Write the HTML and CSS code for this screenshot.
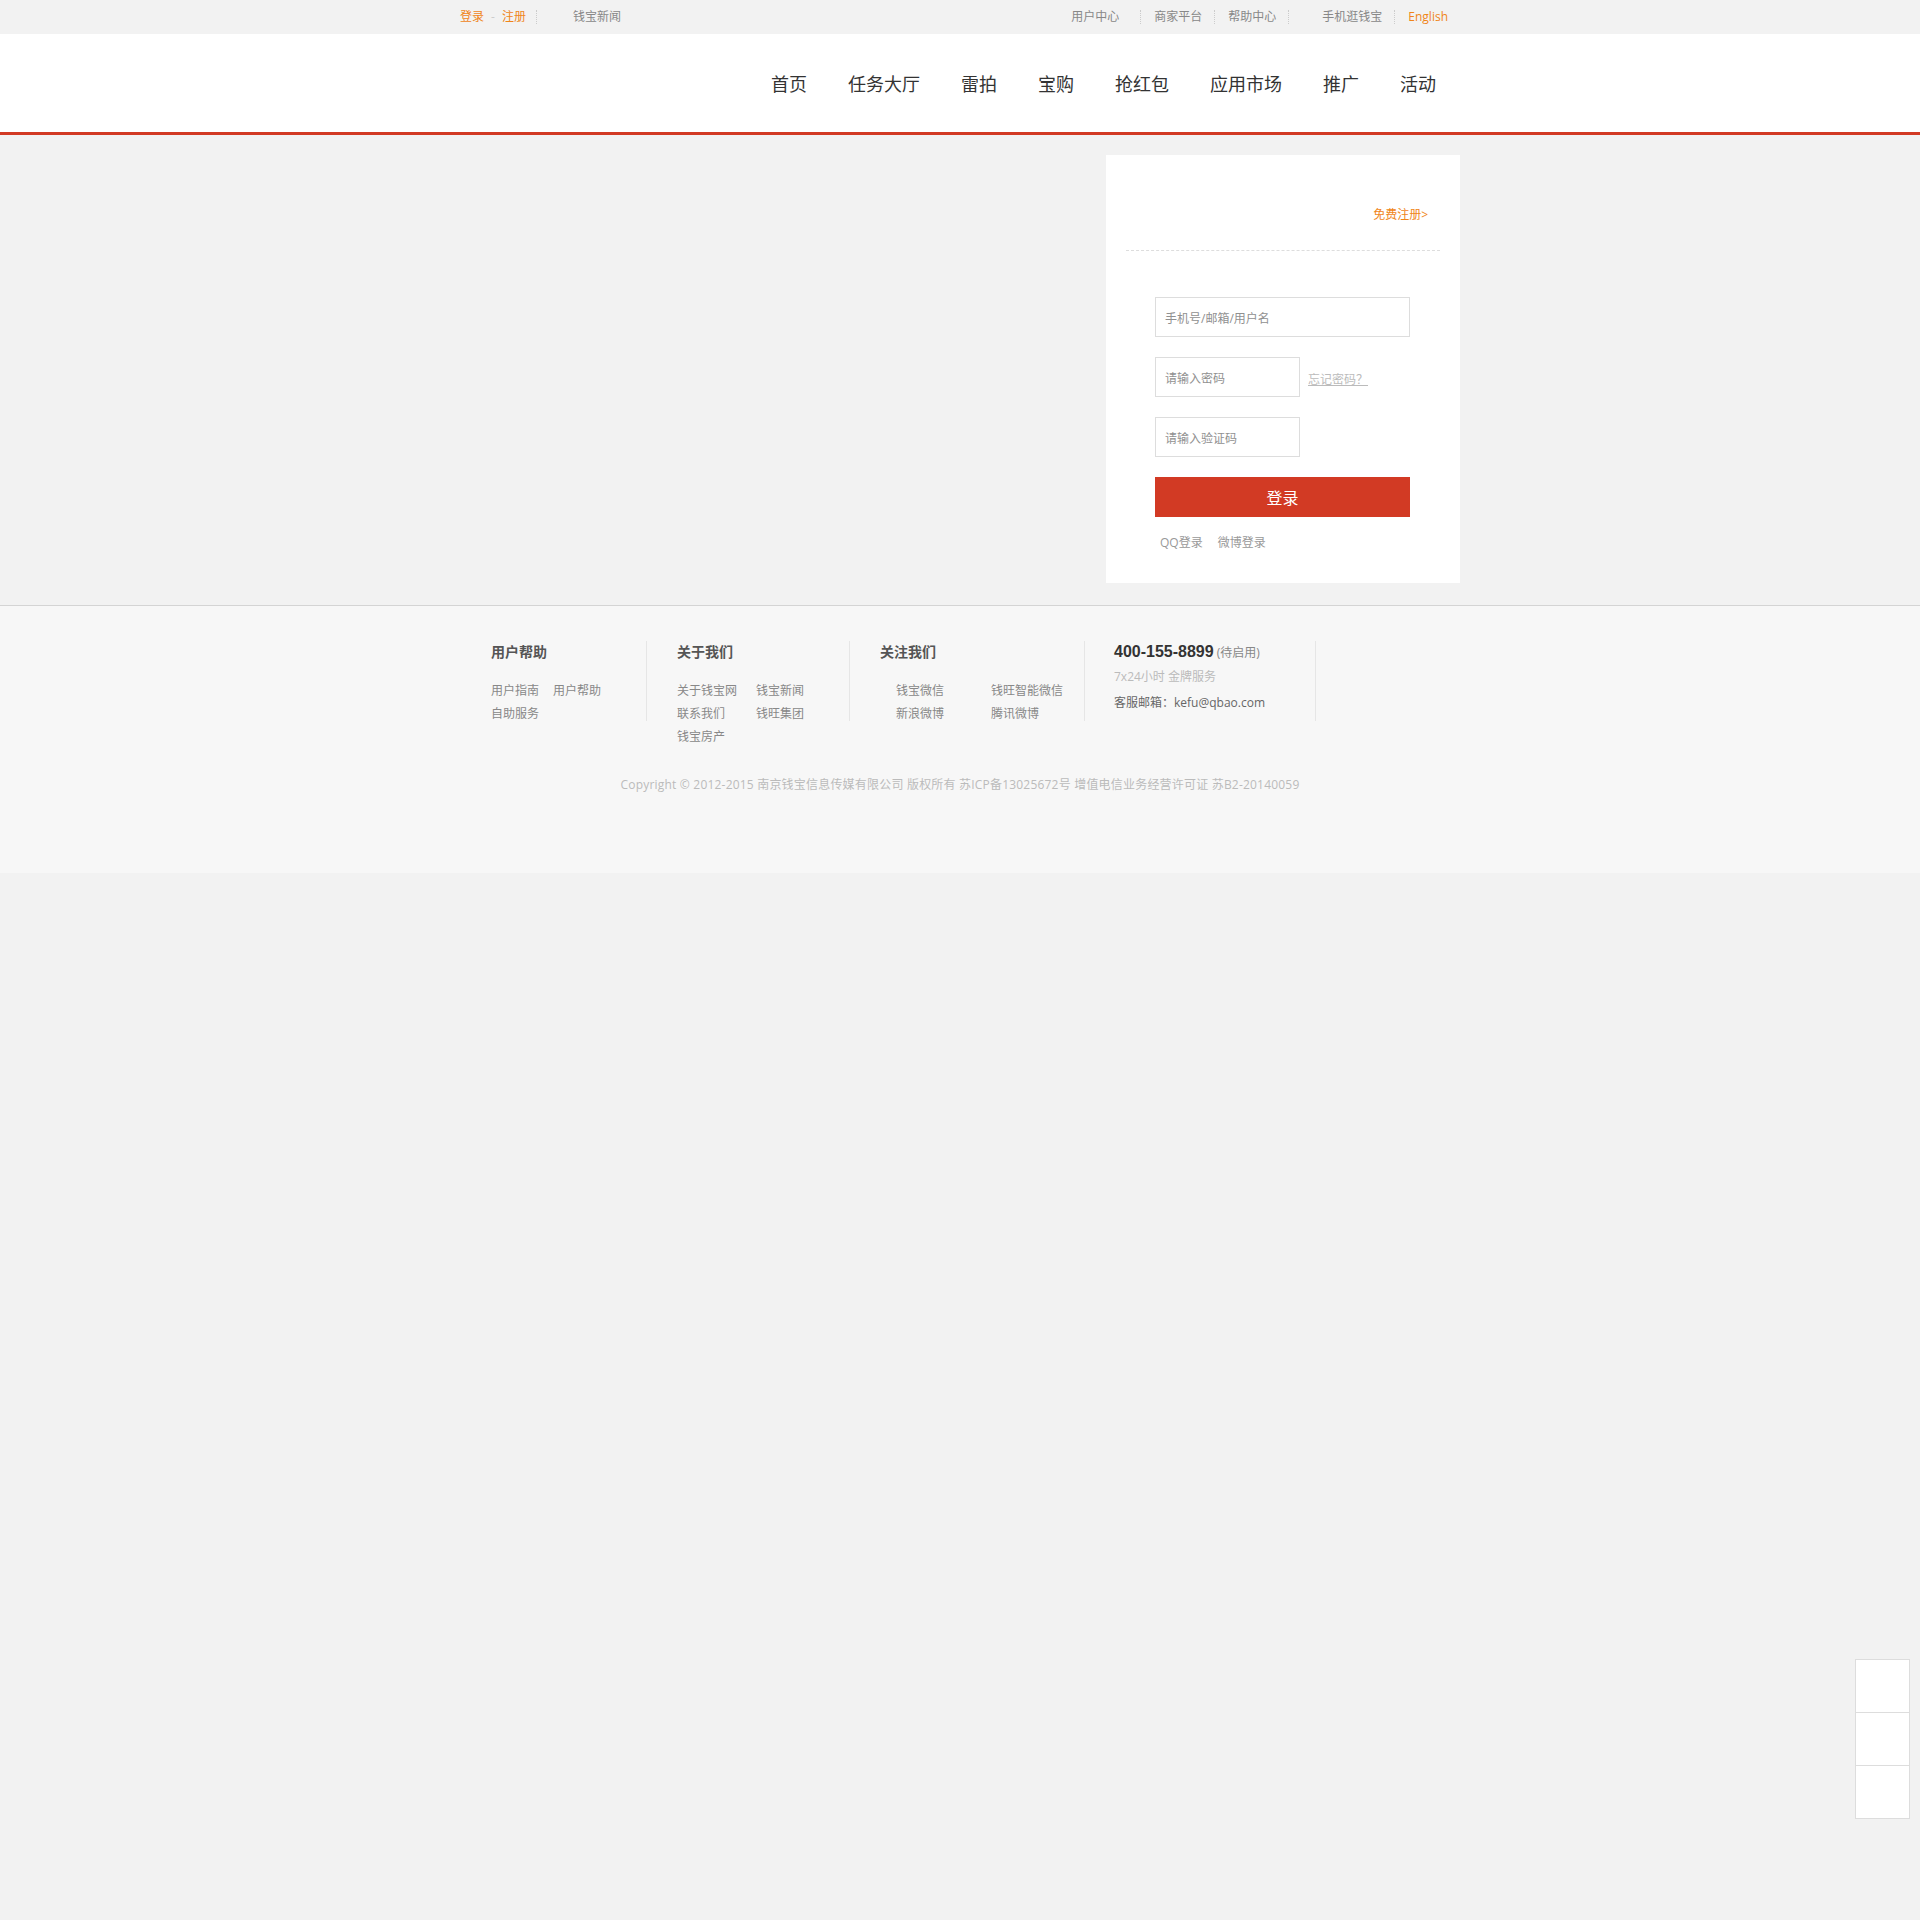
FILE: index.html
```html
<!DOCTYPE html>
<html lang="zh-cn">
<head>
  <meta charset="UTF-8">
  <meta name="viewport" content="width=device-width, initial-scale=1.0">
  <title>登录 - 钱宝网</title>
  <link rel="stylesheet" href="styles.css">
</head>
<body>
  <div class="topbar">
    <div class="wrap">
      <div class="top-left">
        <a href="#" class="hl">登录</a><span class="dash">-</span><a href="#" class="hl">注册</a><i class="sep sep-left"></i><a href="#">钱宝新闻</a>
      </div>
      <div class="top-right">
        <a href="#" class="user">用户中心</a><i class="sep"></i><a href="#">商家平台</a><i class="sep"></i><a href="#">帮助中心</a><i class="sep"></i><a href="#" class="mobile">手机逛钱宝</a><i class="sep"></i><a href="#" class="hl">English</a>
      </div>
    </div>
  </div>

  <header class="header">
    <div class="wrap">
      <ul class="nav">
        <li><a href="#">首页</a></li>
        <li><a href="#">任务大厅</a></li>
        <li><a href="#">雷拍</a></li>
        <li><a href="#">宝购</a></li>
        <li><a href="#">抢红包</a></li>
        <li><a href="#">应用市场</a></li>
        <li><a href="#">推广</a></li>
        <li><a href="#">活动</a></li>
      </ul>
    </div>
  </header>

  <div class="main">
    <div class="wrap">
      <div class="login-box">
        <div class="login-head">
          <a href="#">免费注册&gt;</a>
        </div>
        <form class="login-form">
          <div class="form-row">
            <input class="input" type="text" placeholder="手机号/邮箱/用户名">
          </div>
          <div class="form-row">
            <input class="input short" type="password" placeholder="请输入密码">
            <a href="#" class="forget">忘记密码？</a>
          </div>
          <div class="form-row">
            <input class="input short" type="text" placeholder="请输入验证码">
          </div>
          <button type="button" class="btn">登录</button>
          <div class="other">
            <a href="#">QQ登录</a><a href="#">微博登录</a>
          </div>
        </form>
      </div>
    </div>
  </div>

  <footer class="footer">
    <div class="wrap">
      <div class="foot-cols">
        <div class="col col1">
          <h4>用户帮助</h4>
          <ul class="links">
            <li><a href="#">用户指南</a></li>
            <li><a href="#">用户帮助</a></li>
            <li><a href="#">自助服务</a></li>
          </ul>
        </div>
        <div class="col col2">
          <h4>关于我们</h4>
          <ul class="links">
            <li><a href="#">关于钱宝网</a></li>
            <li><a href="#">钱宝新闻</a></li>
            <li><a href="#">联系我们</a></li>
            <li><a href="#">钱旺集团</a></li>
            <li><a href="#">钱宝房产</a></li>
          </ul>
        </div>
        <div class="col col3">
          <h4>关注我们</h4>
          <ul class="links">
            <li><a href="#">钱宝微信</a></li>
            <li><a href="#">钱旺智能微信</a></li>
            <li><a href="#">新浪微博</a></li>
            <li><a href="#">腾讯微博</a></li>
          </ul>
        </div>
        <div class="col col4">
          <p class="tel"><b>400-155-8899</b> (待启用)</p>
          <p class="service">7x24小时 金牌服务</p>
          <p class="mail">客服邮箱：kefu@qbao.com</p>
        </div>
      </div>
      <p class="copyright">Copyright © 2012-2015 南京钱宝信息传媒有限公司 版权所有 苏ICP备13025672号 增值电信业务经营许可证 苏B2-20140059</p>
    </div>
  </footer>

  <div class="side-bar">
    <a href="#"></a>
    <a href="#"></a>
    <a href="#"></a>
  </div>
</body>
</html>
```

FILE: styles.css
```css
* {
  box-sizing: border-box;
}

body {
  margin: 0;
  min-height: 1920px;
  background-color: #f2f2f2;
  font-family: "Open Sans", "Noto Sans CJK SC", sans-serif;
  font-size: 12px;
  color: #888;
}

a {
  color: inherit;
  text-decoration: none;
}

ul {
  list-style: none;
  margin: 0;
  padding: 0;
}

p,
h4 {
  margin: 0;
}

.wrap {
  width: 1000px;
  margin: 0 auto;
}

/* top bar */
.topbar .wrap {
  height: 34px;
  display: flex;
  justify-content: space-between;
  align-items: center;
  line-height: 16px;
}

.top-left,
.top-right {
  display: flex;
  align-items: center;
}

.top-right {
  padding-right: 12px;
}

.hl {
  color: #f08519;
}

.dash {
  color: #ccc;
  margin: 0 7px;
}

.sep {
  display: inline-block;
  width: 0;
  height: 14px;
  border-left: 1px dotted #ccc;
  margin: 0 13px 0 12px;
}

.sep-left {
  margin: 0 36px 0 10px;
}

.top-right .user {
  margin-right: 9px;
}

.top-right .mobile {
  margin-left: 20px;
}

/* header nav */
.header {
  background-color: #fff;
  border-bottom: 3px solid #d23a24;
}

.header .wrap {
  height: 98px;
  padding-top: 2px;
  display: flex;
  justify-content: flex-end;
  align-items: center;
}

.nav {
  display: flex;
  margin-right: 4px;
}

.nav a {
  display: block;
  padding: 0 20px 0 21px;
  font-size: 18px;
  line-height: 24px;
  color: #333;
}

/* login */
.main {
  padding: 20px 0 22px;
  border-bottom: 1px solid #d4d4d4;
}

.main .wrap {
  display: flex;
  justify-content: flex-end;
}

.login-box {
  width: 354px;
  height: 428px;
  background-color: #fff;
  padding: 0 20px;
}

.login-head {
  height: 96px;
  padding: 52px 12px 0 0;
  text-align: right;
  line-height: 16px;
  border-bottom: 1px dashed #ddd;
}

.login-head a {
  color: #f08519;
}

.login-form {
  padding: 46px 0 0 29px;
}

.form-row {
  display: flex;
  align-items: center;
  margin-bottom: 20px;
}

.input {
  width: 255px;
  height: 40px;
  border: 1px solid #ddd;
  padding: 3px 9px 0;
  font-family: inherit;
  font-size: 12px;
  color: #666;
  outline: none;
}

.input::placeholder {
  color: #909090;
}

.input.short {
  width: 145px;
}

.forget {
  margin: 4px 0 0 8px;
  color: #bbb;
  text-decoration: underline;
}

.btn {
  display: block;
  width: 255px;
  height: 40px;
  border: 0;
  background-color: #d23a24;
  color: #fff;
  font-family: inherit;
  font-size: 16px;
  cursor: pointer;
}

.other {
  margin-top: 18px;
  padding-left: 5px;
  line-height: 16px;
  color: #999;
}

.other a + a {
  margin-left: 15px;
}

/* footer */
.footer {
  background-color: #f7f7f7;
  padding: 35px 0 80px;
}

.foot-cols {
  display: flex;
  height: 80px;
}

.col {
  border-right: 1px solid #e6e6e6;
  padding-left: 30px;
}

.col1 {
  width: 187px;
  padding-left: 31px;
}

.col2 {
  width: 203px;
}

.col3 {
  width: 235px;
}

.col4 {
  width: 231px;
  padding-left: 29px;
}

.col h4 {
  font-size: 14px;
  line-height: 20px;
  padding-top: 1px;
  color: #555;
}

.links {
  display: grid;
  margin-top: 17px;
  line-height: 23px;
}

.col1 .links {
  grid-template-columns: 62px 62px;
}

.col2 .links {
  grid-template-columns: 79px 79px;
}

.col3 .links {
  grid-template-columns: 95px 95px;
  padding-left: 16px;
}

.tel {
  line-height: 20px;
  padding-top: 1px;
  color: #888;
}

.tel b {
  font-family: "Liberation Sans", Arial, sans-serif;
  font-size: 16px;
  color: #333;
}

.service {
  margin-top: 4px;
  line-height: 20px;
  color: #bbb;
}

.mail {
  margin-top: 6px;
  line-height: 20px;
  color: #666;
}

.copyright {
  margin-top: 56px;
  text-align: center;
  line-height: 16px;
  letter-spacing: 0.2px;
  color: #bbb;
}

/* side bar */
.side-bar {
  position: fixed;
  right: 10px;
  bottom: 101px;
  width: 55px;
  border: 1px solid #ddd;
  background-color: #fff;
}

.side-bar a {
  display: block;
  height: 53px;
  border-bottom: 1px solid #ddd;
}

.side-bar a:last-child {
  height: 52px;
  border-bottom: 0;
}
```
